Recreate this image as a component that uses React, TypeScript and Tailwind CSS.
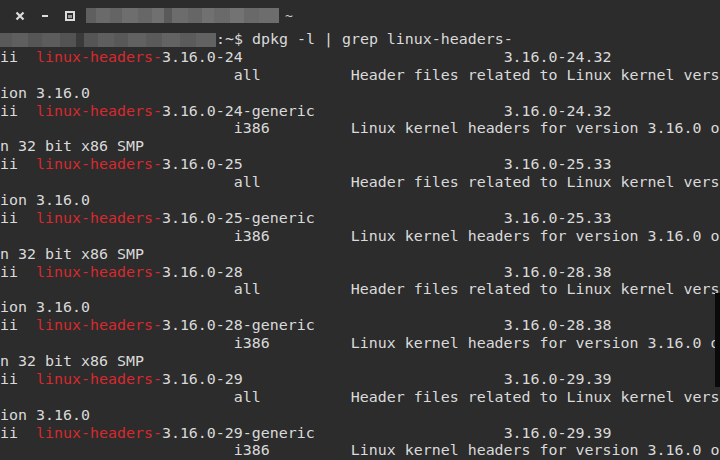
import React from "react";

type Pkg = { name: string; ver: string; arch: string; desc1: string; desc2: string };

const pkgs: Pkg[] = [];
["24", "25", "28", "29"].forEach((n, i) => {
  const v = ["24.32", "25.33", "28.38", "29.39"][i];
  pkgs.push({ name: `3.16.0-${n}`, ver: `3.16.0-${v}`, arch: "all", desc1: "Header files related to Linux kernel vers", desc2: "ion 3.16.0" });
  pkgs.push({ name: `3.16.0-${n}-generic`, ver: `3.16.0-${v}`, arch: "i386", desc1: "Linux kernel headers for version 3.16.0 o", desc2: "n 32 bit x86 SMP" });
});

const Line = ({ children }: { children?: React.ReactNode }) => (
  <div className="h-[17.9px] whitespace-pre leading-[17.9px]">{children}</div>
);

const Blocks = ({ items }: { items: [number, string][] }) => (
  <div className="flex h-full">
    {items.map(([w, c], i) => (
      <div key={i} style={{ width: w, background: c }} className="h-full" />
    ))}
  </div>
);

export default function App() {
  const lines: React.ReactNode[] = [];
  pkgs.forEach((p, i) => {
    lines.push(
      <Line key={`a${i}`}>
        {"ii  "}
        <span className="text-[#d8292e]">linux-headers-</span>
        {p.name.padEnd(38) + p.ver}
      </Line>
    );
    lines.push(<Line key={`b${i}`}>{" ".repeat(26) + p.arch.padEnd(13) + p.desc1}</Line>);
    if (i < pkgs.length - 1) lines.push(<Line key={`c${i}`}>{p.desc2}</Line>);
  });

  return (
    <div className="relative h-[460px] w-[720px] overflow-hidden bg-[#2c2c2c] text-[#dadada]" style={{ fontFamily: '"DejaVu Sans Mono", "Liberation Mono", monospace' }}>
      {/* title bar */}
      <div className="flex h-[31px] items-center">
        <div className="ml-[15px] flex items-center gap-[14px]">
          <svg width="10" height="10" viewBox="0 0 10 10">
            <path d="M1.5 1.5 L8.5 8.5 M8.5 1.5 L1.5 8.5" stroke="#dcdcdc" strokeWidth="2.2" />
          </svg>
          <svg width="8" height="10" viewBox="0 0 8 10" className="ml-[2px]">
            <path d="M1 5 H7" stroke="#dcdcdc" strokeWidth="2" />
          </svg>
          <svg width="10" height="10" viewBox="0 0 10 10" className="ml-[2px]">
            <rect x="1" y="1" width="8" height="8" fill="none" stroke="#dcdcdc" strokeWidth="2" />
            <rect x="3" y="4" width="4" height="3" fill="#9a9a9a" />
          </svg>
        </div>
        <div className="ml-[11px] h-[15px] w-[193px]">
          <Blocks
            items={[
              [10, "#5f5f5f"], [14, "#6a6a6a"], [12, "#646464"], [16, "#6e6e6e"], [14, "#676767"], [12, "#707070"],
              [8, "#5a5a5a"], [16, "#6c6c6c"], [14, "#666666"], [12, "#717171"], [16, "#6a6a6a"], [14, "#737373"],
              [15, "#696969"], [20, "#6d6d6d"],
            ]}
          />
        </div>
        <span className="ml-[6px] text-[13px] text-[#cfcfcf]">~</span>
      </div>
      {/* terminal text */}
      <div className="text-[14.95px]">
        <Line>
          <span className="inline-flex h-[14px] w-[216px] align-middle">
            <Blocks
              items={[
                [12, "#595959"], [16, "#5f5f5f"], [14, "#565656"], [18, "#5c5c5c"], [16, "#535353"], [8, "#3a3a3a"],
                [14, "#555555"], [16, "#5e5e5e"], [14, "#585858"], [18, "#616161"], [16, "#5a5a5a"], [18, "#636363"],
                [16, "#5b5b5b"], [20, "#626262"],
              ]}
            />
          </span>
          {":~$ dpkg -l | grep linux-headers-"}
        </Line>
        {lines}
      </div>
      <div className="absolute left-[715px] top-[293px] h-[94px] w-[5px] bg-[#0a0a0a]" />
    </div>
  );
}
